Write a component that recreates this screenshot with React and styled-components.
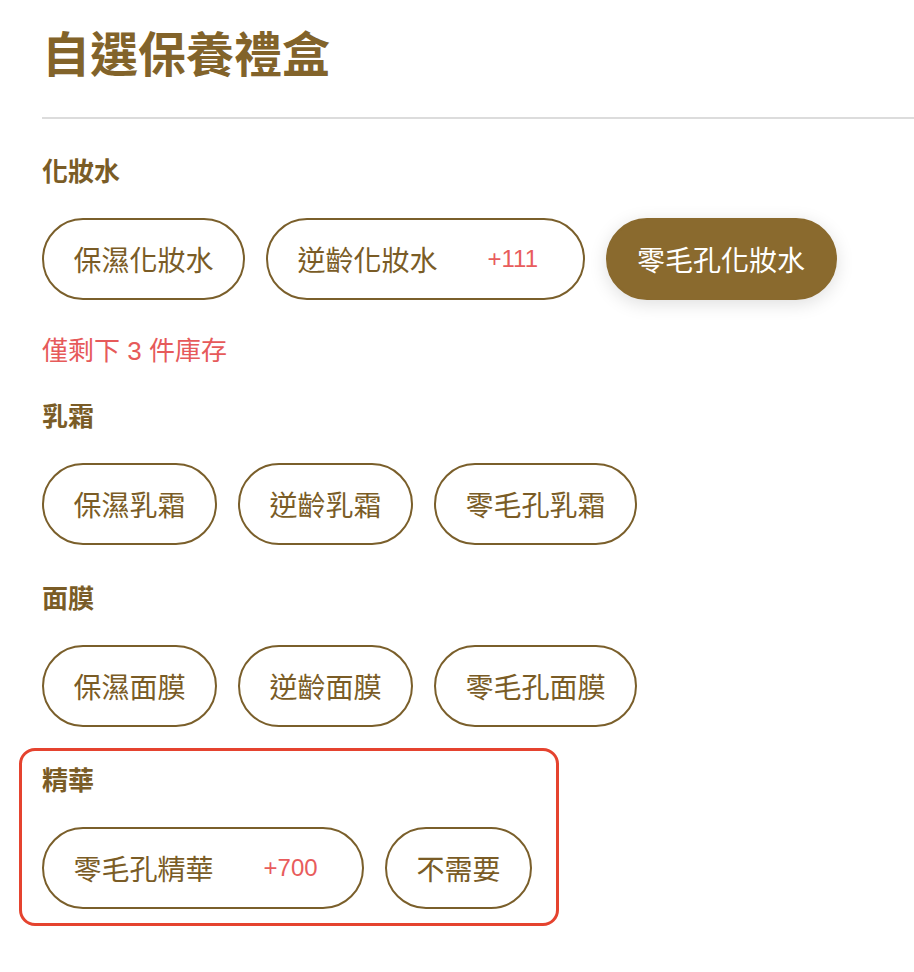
import React, { useState } from 'react'
import styled, { createGlobalStyle, css } from 'styled-components'

const GlobalStyle = createGlobalStyle`
  body {
    margin: 0;
    background: #fff;
    font-family: "Liberation Sans", "Noto Sans CJK TC", sans-serif;
  }
`

const Page = styled.div`
  padding: 20px 0 40px 42px;
`

const Title = styled.h1`
  margin: 0;
  font-size: 48px;
  line-height: 1.3;
  font-weight: 700;
  color: #82632a;
  font-family: "Noto Sans CJK TC", sans-serif;
`

const Divider = styled.hr`
  margin: 35px 0 20px 0;
  border: none;
  height: 2px;
  background: #dcdcdc;
`

const Section = styled.section`
  width: fit-content;
  margin: 0 0 4px -23px;
  padding: 10px 24px 14px 20px;
  border: 3px solid ${(p) => (p.$highlight ? '#e5432f' : 'transparent')};
  border-radius: 16px;
`

const Label = styled.h2`
  margin: 0 0 30px 0;
  font-size: 26px;
  line-height: 36px;
  font-weight: 700;
  color: #7a5c26;
  font-family: "Noto Sans CJK TC", sans-serif;
`

const Options = styled.div`
  display: flex;
  flex-wrap: wrap;
  gap: 21px;
`

const Option = styled.button`
  display: inline-flex;
  align-items: center;
  box-sizing: border-box;
  height: 82px;
  padding: 0 29.5px;
  border: 2px solid #7a5f2b;
  border-radius: 999px;
  background: #fff;
  color: #7a5c26;
  font-family: "Liberation Sans", "Noto Sans CJK TC", sans-serif;
  font-size: 28px;
  cursor: pointer;
  white-space: nowrap;

  ${(p) =>
    p.$active &&
    css`
      background: #8a6a2e;
      border-color: #8a6a2e;
      color: #fff;
      box-shadow: 0 4px 18px rgba(0, 0, 0, 0.13);
    `}
`

const Price = styled.span`
  margin: 0 15px 0 50px;
  font-size: 24px;
  color: #e85c5c;
`

const Stock = styled.p`
  margin: 37px 0 -2px 0;
  font-size: 26px;
  line-height: 28px;
  color: #e65a5a;
`

const groups = [
  {
    key: 'toner',
    label: '化妝水',
    items: [
      { name: '保濕化妝水' },
      { name: '逆齡化妝水', price: '+111' },
      { name: '零毛孔化妝水' },
    ],
    stock: 3,
  },
  {
    key: 'cream',
    label: '乳霜',
    items: [{ name: '保濕乳霜' }, { name: '逆齡乳霜' }, { name: '零毛孔乳霜' }],
  },
  {
    key: 'mask',
    label: '面膜',
    items: [{ name: '保濕面膜' }, { name: '逆齡面膜' }, { name: '零毛孔面膜' }],
  },
  {
    key: 'serum',
    label: '精華',
    items: [{ name: '零毛孔精華', price: '+700' }, { name: '不需要' }],
    highlight: true,
  },
]

export default function App() {
  const [picked, setPicked] = useState({ toner: '零毛孔化妝水' })

  return (
    <Page>
      <GlobalStyle />
      <Title>自選保養禮盒</Title>
      <Divider />
      {groups.map((g) => (
        <Section key={g.key} $highlight={g.highlight}>
          <Label>{g.label}</Label>
          <Options>
            {g.items.map((it) => (
              <Option
                key={it.name}
                $active={picked[g.key] === it.name}
                onClick={() => setPicked({ ...picked, [g.key]: it.name })}
              >
                {it.name}
                {it.price && <Price>{it.price}</Price>}
              </Option>
            ))}
          </Options>
          {g.stock && picked[g.key] && <Stock>僅剩下 {g.stock} 件庫存</Stock>}
        </Section>
      ))}
    </Page>
  )
}
